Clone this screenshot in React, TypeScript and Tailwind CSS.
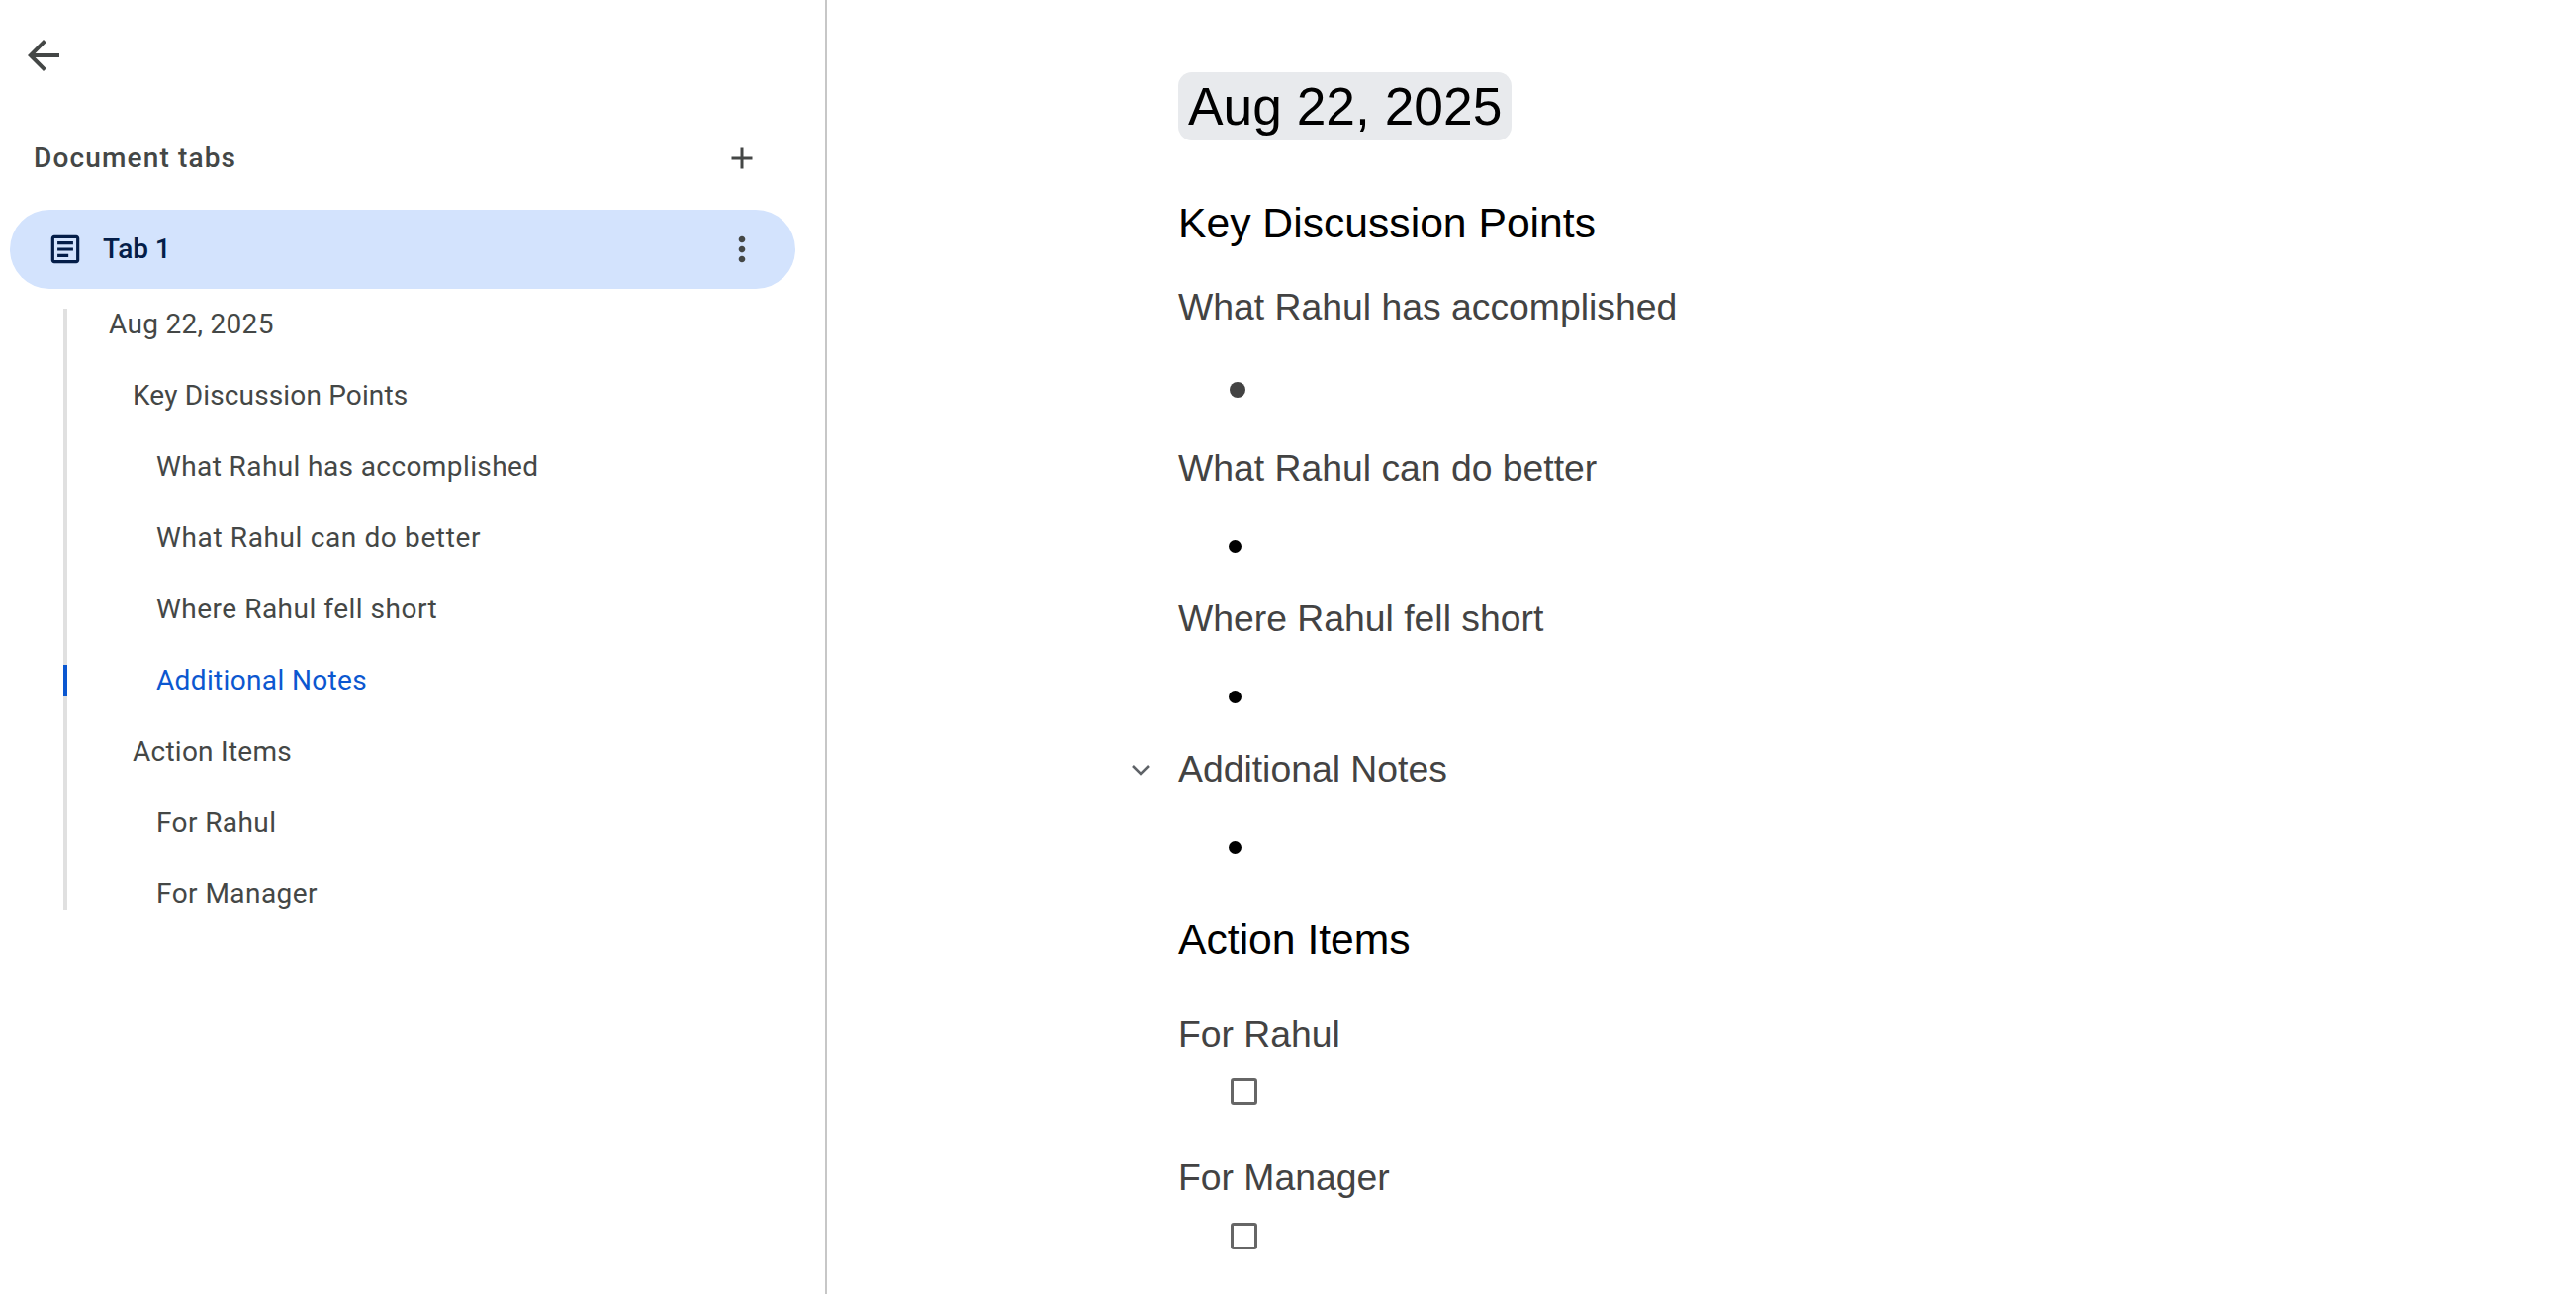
import type { ReactNode } from 'react';

const outline = [
  { label: 'Aug 22, 2025', indent: 'pl-[42px] tracking-[0.3px]' },
  { label: 'Key Discussion Points', indent: 'pl-[66px] tracking-[0.15px]' },
  { label: 'What Rahul has accomplished', indent: 'pl-[90px] tracking-[0.4px]' },
  { label: 'What Rahul can do better', indent: 'pl-[90px] tracking-[0.63px]' },
  { label: 'Where Rahul fell short', indent: 'pl-[90px] tracking-[0.5px]' },
  { label: 'Additional Notes', indent: 'pl-[90px] tracking-[0.35px]', active: true },
  { label: 'Action Items', indent: 'pl-[66px] tracking-[0.25px]' },
  { label: 'For Rahul', indent: 'pl-[90px] tracking-[0.4px]' },
  { label: 'For Manager', indent: 'pl-[90px] tracking-[0.45px]' },
];

function Sidebar() {
  return (
    <aside className="w-[836px] h-full shrink-0 border-r-2 border-[#c7c7c7] font-['Roboto',sans-serif]">
      <div className="h-[112px] pl-5 pt-8">
        <svg width="48" height="48" viewBox="0 0 24 24" fill="#444746">
          <path d="M20 11H7.83l5.59-5.59L12 4l-8 8 8 8 1.41-1.41L7.83 13H20v-2z" />
        </svg>
      </div>
      <div className="flex items-center justify-between h-[96px] pl-[34px] pr-[66px]">
        <span className="text-[28px] font-medium tracking-[1.15px] text-[#444746]">Document tabs</span>
        <svg width="36" height="36" viewBox="0 0 24 24" fill="#444746">
          <path d="M19 13h-6v6h-2v-6H5v-2h6V5h2v6h6v2z" />
        </svg>
      </div>
      <div className="flex items-center justify-between ml-[10px] w-[794px] h-20 mt-[4px] rounded-full bg-[#d3e3fd] pl-[37px] pr-[34px]">
        <div className="flex items-center gap-[19px]">
          <svg width="38" height="38" viewBox="0 0 24 24" fill="#041e49">
            <path d="M19 5v14H5V5h14m0-2H5c-1.1 0-2 .9-2 2v14c0 1.1.9 2 2 2h14c1.1 0 2-.9 2-2V5c0-1.1-.9-2-2-2z" />
            <path d="M14 17H7v-2h7v2zm3-4H7v-2h10v2zm0-4H7V7h10v2z" />
          </svg>
          <span className="text-[28px] font-medium tracking-[-0.1px] text-[#041e49]">Tab 1</span>
        </div>
        <svg width="40" height="40" viewBox="0 0 24 24" fill="#444746">
          <path d="M12 8c1.1 0 2-.9 2-2s-.9-2-2-2-2 .9-2 2 .9 2 2 2zm0 2c-1.1 0-2 .9-2 2s.9 2 2 2 2-.9 2-2-.9-2-2-2zm0 6c-1.1 0-2 .9-2 2s.9 2 2 2 2-.9 2-2-.9-2-2-2z" />
        </svg>
      </div>
      <div className="ml-16 mt-5 flex flex-col gap-10 border-l-4 border-[#e0e0e0]">
        {outline.map((item) => (
          <div key={item.label} className={`relative h-8 leading-8 text-[28px] ${item.indent} ${item.active ? 'text-[#0b57d0]' : 'text-[#444746]'}`}>
            {item.active && <span className="absolute -left-1 top-0 w-1 h-8 bg-[#0b57d0]"></span>}
            {item.label}
          </div>
        ))}
      </div>
    </aside>
  );
}

function Heading3({ children, className = '' }: { children: ReactNode; className?: string }) {
  return <h3 className={`relative text-[37.33px] leading-[48px] h-12 text-[#434343] ${className}`}>{children}</h3>;
}

function Bullet({ className }: { className: string }) {
  return (
    <div className={`h-10 flex items-center ml-[51px] ${className}`}>
      <span className="block w-[13px] h-[13px] rounded-full bg-black"></span>
    </div>
  );
}

function Checkbox({ className }: { className: string }) {
  return <div className={`ml-[53px] w-[27px] h-[27px] rounded-[3px] border-[3px] border-[#666666] ${className}`}></div>;
}

export default function App() {
  return (
    <div className="flex h-screen w-full overflow-hidden bg-white">
      <Sidebar />
      <main className="flex-1 pl-[355px] pt-[73px] font-['Liberation_Sans',Arial,sans-serif]">
        <h1 className="w-fit h-[69px] px-[10px] rounded-[14px] bg-[#e8eaed] text-[53.33px] leading-[69px] text-black">Aug 22, 2025</h1>
        <h2 className="mt-[55px] h-14 text-[42.67px] leading-[56px] text-black">Key Discussion Points</h2>
        <Heading3 className="mt-[33px]">What Rahul has accomplished</Heading3>
        <div className="mt-10 mb-[35px] h-10 flex items-center ml-[52px]">
          <span className="block w-4 h-4 rounded-full bg-[#434343]"></span>
        </div>
        <Heading3>What Rahul can do better</Heading3>
        <Bullet className="mt-[35px] mb-[29px]" />
        <Heading3>Where Rahul fell short</Heading3>
        <Bullet className="mt-[35px] mb-[29px]" />
        <Heading3>
          <svg className="absolute -left-[49px] top-[18px]" width="22" height="16" viewBox="0 0 22 16" fill="none" stroke="#5f6368" strokeWidth="2.5">
            <path d="M3 3l8 8 8-8" />
          </svg>
          Additional Notes
        </Heading3>
        <Bullet className="mt-[35px] mb-[45px]" />
        <h2 className="h-14 text-[42.67px] leading-[56px] text-black">Action Items</h2>
        <Heading3 className="mt-[44px]">For Rahul</Heading3>
        <Checkbox className="mt-[21px]" />
        <Heading3 className="mt-[49px]">For Manager</Heading3>
        <Checkbox className="mt-[22px]" />
      </main>
    </div>
  );
}
